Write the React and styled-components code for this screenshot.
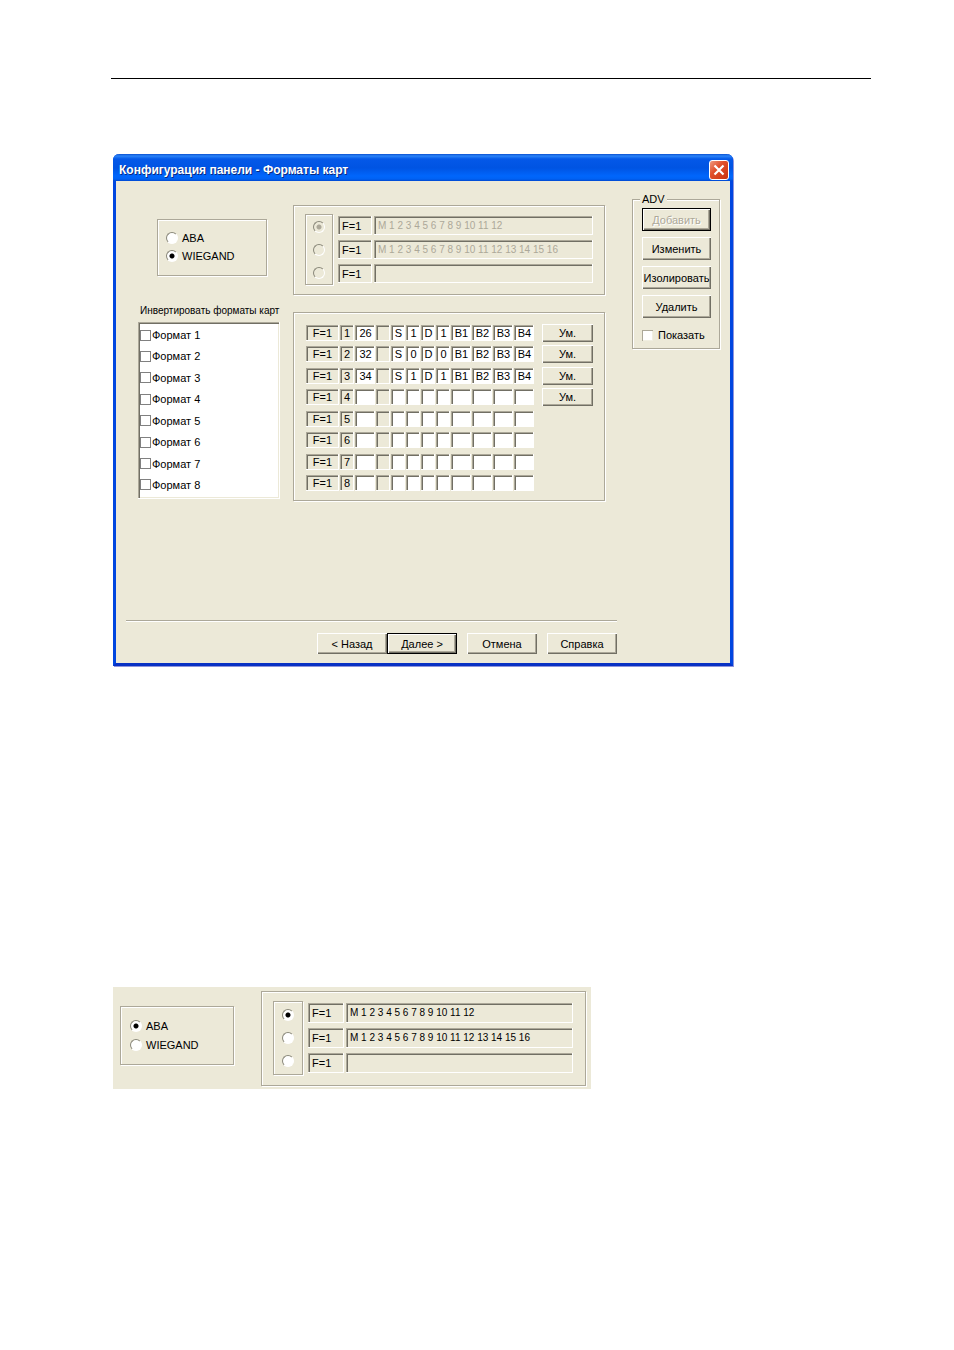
import React from "react";
import styled, { createGlobalStyle, css } from "styled-components";

const formats = [
  { id: 1, length: "26", bits: ["S", "1", "D", "1"], bytes: ["B1", "B2", "B3", "B4"] },
  { id: 2, length: "32", bits: ["S", "0", "D", "0"], bytes: ["B1", "B2", "B3", "B4"] },
  { id: 3, length: "34", bits: ["S", "1", "D", "1"], bytes: ["B1", "B2", "B3", "B4"] },
  { id: 4 },
  { id: 5 },
  { id: 6 },
  { id: 7 },
  { id: 8 },
];
const emptyCells = ["", "", "", ""];

const tracks = [
  "M 1 2 3 4 5 6 7 8 9 10 11 12",
  "M 1 2 3 4 5 6 7 8 9 10 11 12 13 14 15 16",
  "",
];

function CardType({ name, selected, large }) {
  return (
    <TypeGroup aria-label="Тип карты" $large={large}>
      {["ABA", "WIEGAND"].map((type) => (
        <Option key={type}>
          <Radio name={name} defaultChecked={type === selected} />
          {type}
        </Option>
      ))}
    </TypeGroup>
  );
}

function Tracks({ name, disabled, large }) {
  return (
    <TracksGroup aria-label="ABA" $large={large}>
      <TrackChoice $large={large}>
        {tracks.map((track, i) => (
          <Radio
            key={i}
            name={name}
            aria-label={`Дорожка ${i + 1}`}
            defaultChecked={i === 0}
            disabled={disabled}
          />
        ))}
      </TrackChoice>
      <TrackFields>
        {tracks.map((track, i) => (
          <TrackRow key={i} $large={large}>
            <Field aria-label={`Код ${i + 1}`} defaultValue="F=1" />
            <Field
              aria-label={`Данные ${i + 1}`}
              defaultValue={track}
              disabled={disabled}
              $digits
            />
          </TrackRow>
        ))}
      </TrackFields>
    </TracksGroup>
  );
}

function WiegandFormats() {
  return (
    <FormatsGroup aria-label="WIEGAND">
      <FormatRows>
        {formats.map(({ id, length = "", bits = emptyCells, bytes = emptyCells }) => (
          <FormatRow key={id}>
            <Cell>F=1</Cell>
            <Cell>{id}</Cell>
            <CellInput aria-label={`Длина ${id}`} defaultValue={length} />
            <Cell />
            {bits.map((bit, i) => (
              <CellInput key={i} aria-label={`Бит ${id}.${i + 1}`} defaultValue={bit} />
            ))}
            {bytes.map((byte, i) => (
              <CellInput key={i} aria-label={`Байт ${id}.${i + 1}`} defaultValue={byte} />
            ))}
            {id <= 4 && <SmallButton>Ум.</SmallButton>}
          </FormatRow>
        ))}
      </FormatRows>
    </FormatsGroup>
  );
}

export default function App() {
  return (
    <Page>
      <GlobalStyle />
      <Rule />
      <Dialog>
        <TitleBar>
          <h1>Конфигурация панели - Форматы карт</h1>
          <CloseButton aria-label="Закрыть">
            <svg width="12" height="12" viewBox="0 0 12 12">
              <path d="M1.5 1.5L10.5 10.5M10.5 1.5L1.5 10.5" stroke="#fff" strokeWidth="2.2" />
            </svg>
          </CloseButton>
        </TitleBar>
        <Content>
          <Column>
            <CardType name="type" selected="WIEGAND" />
            <ListTitle id="invert">Инвертировать форматы карт</ListTitle>
            <List role="group" aria-labelledby="invert">
              {formats.map(({ id }) => (
                <ListItem key={id}>
                  <Checkbox $flat />
                  Формат {id}
                </ListItem>
              ))}
            </List>
          </Column>
          <Column>
            <Tracks name="track" disabled />
            <WiegandFormats />
          </Column>
          <Adv>
            <legend>ADV</legend>
            <Button disabled $default>Добавить</Button>
            <Button>Изменить</Button>
            <Button>Изолировать</Button>
            <Button>Удалить</Button>
            <Show>
              <Checkbox />
              Показать
            </Show>
          </Adv>
        </Content>
        <Footer>
          <StepButton>&lt; Назад</StepButton>
          <StepButton $default>Далее &gt;</StepButton>
          <FooterButton>Отмена</FooterButton>
          <FooterButton>Справка</FooterButton>
        </Footer>
      </Dialog>
      <Panel>
        <CardType name="panel-type" selected="ABA" large />
        <Tracks name="panel-track" large />
      </Panel>
    </Page>
  );
}

const GlobalStyle = createGlobalStyle`
  * {
    box-sizing: border-box;
  }
  body {
    margin: 0;
    background: #fff;
    color: #000;
    font: 11px/14px "Liberation Sans", Arial, sans-serif;
  }
  button, input {
    margin: 0;
    padding: 0;
    border: 0;
    border-radius: 0;
    color: inherit;
    font: inherit;
  }
`;

const sunken = css`
  box-shadow: inset -1px -1px #fff, inset 1px 1px #aca899, inset 2px 2px #716f64;
`;

const Page = styled.main`
  padding: 78px 83px 0 111px;
`;

const Rule = styled.hr`
  height: 1px;
  margin: 0 0 75px;
  border: 0;
  background: #000;
`;

const Dialog = styled.section`
  max-width: 620px;
  margin-left: 2px;
  border: 3px solid #0046e0;
  border-top: 0;
  border-bottom-color: #0831c4;
  border-radius: 6px 6px 0 0;
  background: #ece9d8;
  box-shadow: 1px 1px #8f94dc;
`;

const TitleBar = styled.header`
  display: flex;
  align-items: center;
  justify-content: space-between;
  height: 27px;
  margin: 0 -3px;
  padding: 4px 4px 0 6px;
  border-radius: 6px 6px 0 0;
  background: linear-gradient(#0a50d0 0, #2b84f8 2px, #0458e8 5px, #0054e3 14px, #0066fc 22px, #0062f4 25px, #0048d0 27px);
  h1 {
    margin: 0;
    color: #fff;
    font-size: 12px;
    line-height: 16px;
    text-shadow: 1px 1px #0a2a80;
  }
`;

const CloseButton = styled.button`
  display: flex;
  align-items: center;
  justify-content: center;
  width: 20px;
  height: 20px;
  border: 1px solid #fff;
  border-radius: 3px;
  background: linear-gradient(135deg, #f09a80, #e0502c 40%, #c83410);
`;

const Content = styled.div`
  display: grid;
  grid-template-columns: 142px 1fr 88px;
  align-items: start;
  padding: 12px 10px 0 22px;
`;

const Column = styled.div`
  padding-top: 12px;
  & + & {
    padding-right: 27px;
    padding-left: 13px;
  }
`;

const Group = styled.fieldset`
  min-width: 0;
  margin: 0;
  padding: 0;
  border: 1px solid #aca899;
  box-shadow: 1px 1px #fff, inset 1px 1px #fff;
`;

const TypeGroup = styled(Group)`
  display: flex;
  flex-direction: column;
  gap: ${({ $large }) => ($large ? 5 : 4)}px;
  width: ${({ $large }) => ($large ? 114 : 110)}px;
  margin: ${({ $large }) => ($large ? "15px 27px 0 0" : "14px 0 0 19px")};
  padding: ${({ $large }) => ($large ? "12px 9px" : "11px 8px 12px")};
`;

const Option = styled.label`
  display: flex;
  align-items: center;
  gap: 4px;
`;

const Radio = styled.input.attrs({ type: "radio" })`
  flex: none;
  appearance: none;
  width: 12px;
  height: 12px;
  border: 1px solid;
  border-color: #8a887a #fff #fff #8a887a;
  border-radius: 50%;
  background: #fff;
  &:checked {
    background: radial-gradient(circle, #000 2px, #fff 3px);
  }
  &:disabled {
    background: #ece9d8;
  }
  &:disabled:checked {
    background: radial-gradient(circle, #aca899 2px, #ece9d8 3px);
  }
`;

const Checkbox = styled.input.attrs({ type: "checkbox" })`
  flex: none;
  appearance: none;
  width: 11px;
  height: 11px;
  background: #fff;
  ${({ $flat }) =>
    $flat
      ? css`border: 1px solid #808080;`
      : css`box-shadow: inset 1px 1px #aca899, inset -1px -1px #f1efe2;`}
`;

const ListTitle = styled.h2`
  margin: 28px 0 4px 2px;
  font-size: 10px;
  font-weight: normal;
  line-height: 14px;
  white-space: nowrap;
`;

const List = styled.div`
  display: flex;
  flex-direction: column;
  justify-content: space-between;
  min-height: 177px;
  padding: 6px 2px 7px;
  background: #fff;
  box-shadow: inset -1px -1px #fff, inset 1px 1px #aca899, inset 2px 2px #716f64,
    inset -2px -2px #ece9d8;
`;

const ListItem = styled.label`
  display: flex;
  align-items: center;
  gap: 1px;
`;

const TracksGroup = styled(Group)`
  display: flex;
  flex: 1;
  gap: 5px;
  padding: ${({ $large }) => ($large ? "9px 12px 10px 11px" : "8px 11px 9px")};
`;

const TrackChoice = styled.div`
  display: flex;
  flex-direction: column;
  align-items: center;
  justify-content: center;
  gap: 11px;
  width: ${({ $large }) => ($large ? 30 : 28)}px;
  min-height: ${({ $large }) => ($large ? 74 : 71)}px;
  border: 1px solid #aca899;
  box-shadow: 1px 1px #fff, inset 1px 1px #fff;
`;

const TrackFields = styled.div`
  display: flex;
  flex: 1;
  flex-direction: column;
  gap: 5px;
  padding-top: 2px;
`;

const TrackRow = styled.div`
  display: grid;
  grid-template-columns: ${({ $large }) => ($large ? 36 : 34)}px 1fr;
  gap: 2px;
  height: ${({ $large }) => ($large ? 20 : 19)}px;
`;

const Field = styled.input`
  min-width: 0;
  padding: 0 4px;
  background: #ece9d8;
  font-size: ${({ $digits }) => ($digits ? 10 : 11)}px;
  ${sunken}
  &:disabled {
    color: #aca899;
  }
`;

const FormatsGroup = styled(Group)`
  margin-top: 17px;
  padding: 11px 11px 8px 12px;
`;

const FormatRows = styled.div`
  display: flex;
  flex-direction: column;
  justify-content: space-between;
  min-height: 168px;
`;

const FormatRow = styled.div`
  display: grid;
  grid-template-columns: 33px 14px 20px repeat(5, 14px) repeat(4, 20px) 58px;
  align-items: center;
  gap: 1px;
  height: 18px;
`;

const Cell = styled.span`
  height: 16px;
  line-height: 17px;
  text-align: center;
  ${sunken}
`;

const CellInput = styled.input`
  width: 100%;
  height: 16px;
  padding-left: 1px;
  background: #fff;
  text-align: center;
  ${sunken}
`;

const Button = styled.button`
  height: 23px;
  background: #ece9d8;
  box-shadow: inset 1px 1px #fff, inset -1px -1px #716f64, inset -2px -2px #aca899;
  white-space: nowrap;
  ${({ $default }) => $default && css`border: 1px solid #000;`}
  &:disabled {
    color: #aca899;
    text-shadow: 1px 1px #fff;
  }
`;

const SmallButton = styled(Button)`
  height: 18px;
  margin-left: 7px;
`;

const Adv = styled(Group)`
  display: flex;
  flex-direction: column;
  gap: 6px;
  padding: 2px 8px 6px 9px;
  legend {
    margin-left: -2px;
    padding: 0 2px;
    background: #ece9d8;
    line-height: 13px;
  }
`;

const Show = styled.label`
  display: flex;
  align-items: center;
  gap: 5px;
  padding-top: 4px;
`;

const Footer = styled.footer`
  display: flex;
  justify-content: flex-end;
  margin: 119px 113px 0 10px;
  padding: 12px 0 9px;
  border-top: 1px solid #aca899;
  box-shadow: inset 0 1px #fff;
`;

const StepButton = styled(Button)`
  width: 70px;
  height: 21px;
`;

const FooterButton = styled(StepButton)`
  margin-left: 10px;
`;

const Panel = styled.section`
  display: flex;
  align-items: flex-start;
  max-width: 478px;
  margin: 321px 0 0 2px;
  padding: 4px 5px 3px 7px;
  background: #ece9d8;
`;
